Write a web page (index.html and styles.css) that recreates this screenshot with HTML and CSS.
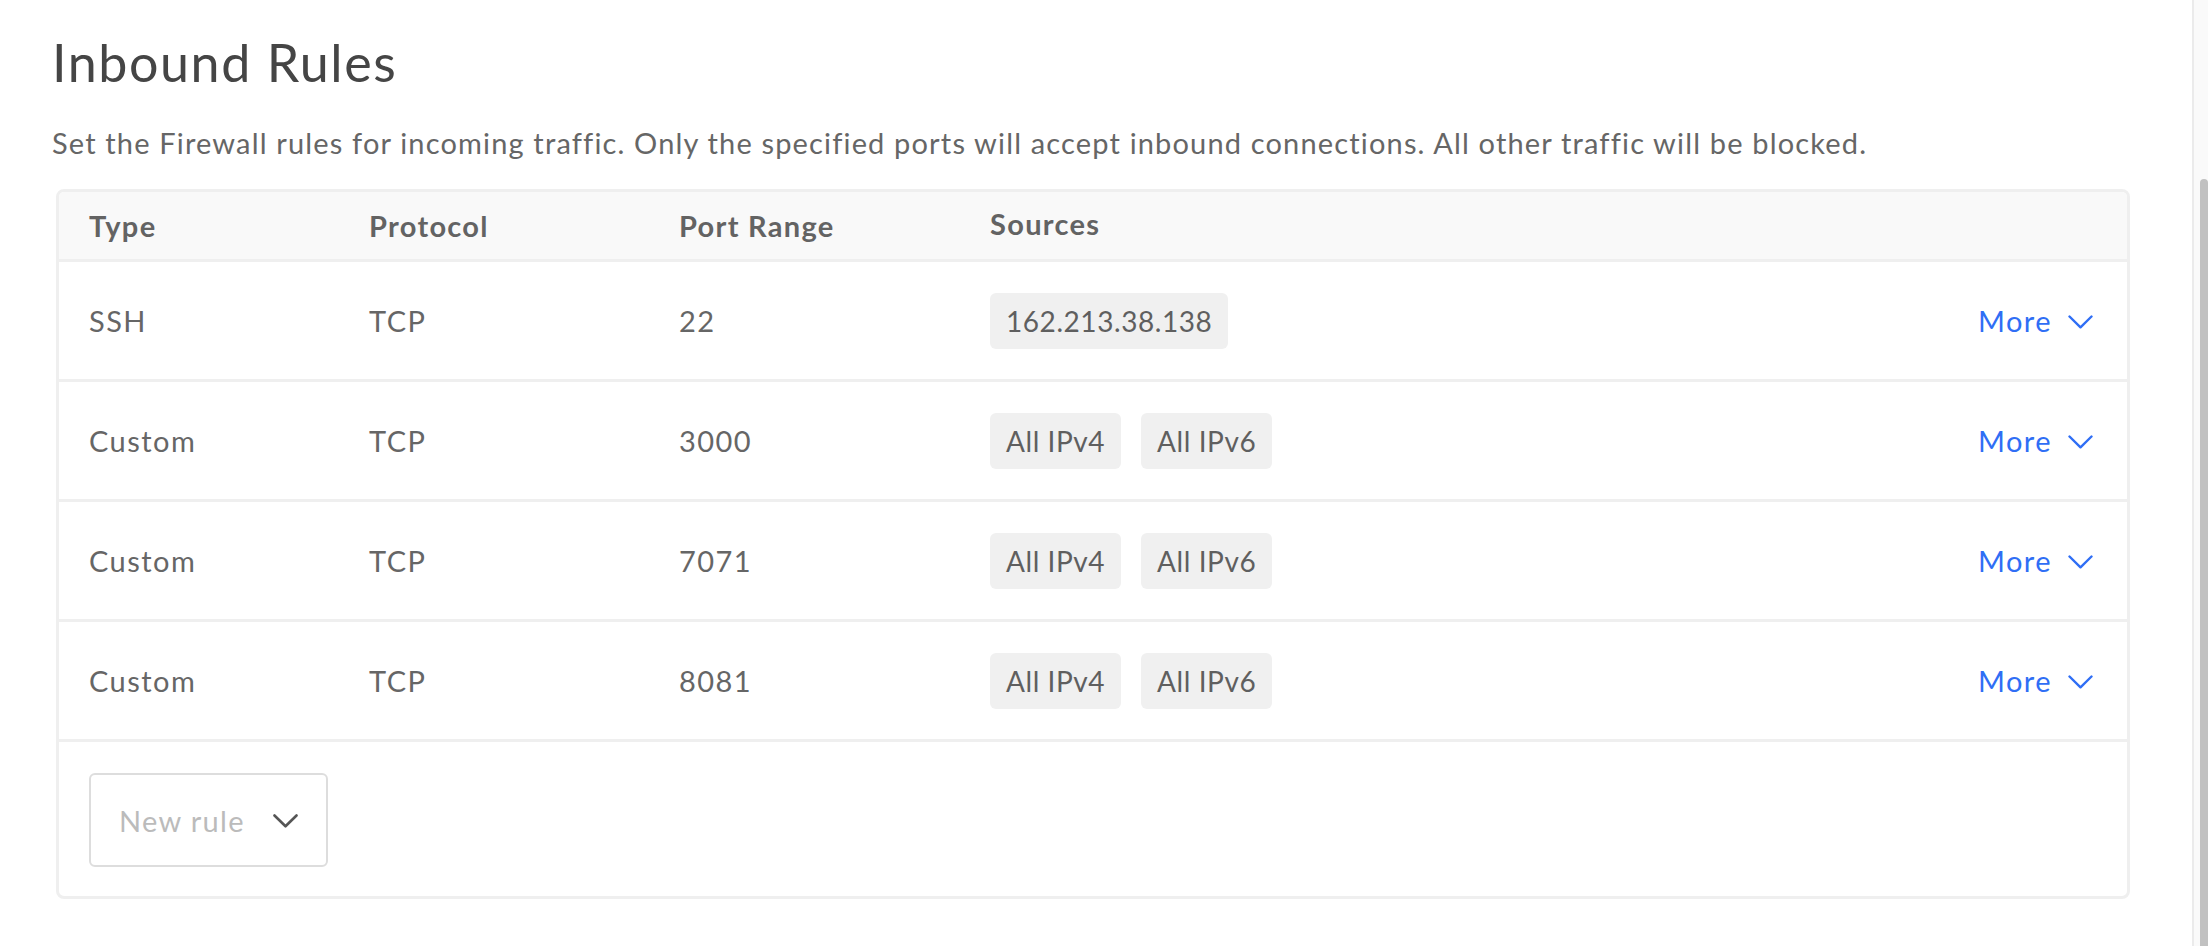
FILE: index.html
```html
<!DOCTYPE html>
<html lang="en">
<head>
<meta charset="utf-8">
<title>Inbound Rules</title>
<link rel="stylesheet" href="styles.css">
</head>
<body>
<div class="page">
  <main class="main">
    <h1 class="title">Inbound Rules</h1>
    <p class="desc">Set the Firewall rules for incoming traffic. Only the specified ports will accept inbound connections. All other traffic will be blocked.</p>
    <div class="table">
      <div class="row head">
        <div class="cell">Type</div>
        <div class="cell">Protocol</div>
        <div class="cell">Port Range</div>
        <div class="cell sources-h">Sources</div>
        <div class="cell"></div>
      </div>
      <div class="row">
        <div class="cell">SSH</div>
        <div class="cell">TCP</div>
        <div class="cell">22</div>
        <div class="cell chips"><span class="chip">162.213.38.138</span></div>
        <div class="cell"><a class="more">More <svg class="chev" viewBox="0 0 25 14" width="25" height="14"><path d="M1.5 1.5 L12.5 12.3 L23.5 1.5" fill="none" stroke="currentColor" stroke-width="2.4" stroke-linecap="round" stroke-linejoin="round"/></svg></a></div>
      </div>
      <div class="row">
        <div class="cell">Custom</div>
        <div class="cell">TCP</div>
        <div class="cell">3000</div>
        <div class="cell chips"><span class="chip">All IPv4</span><span class="chip">All IPv6</span></div>
        <div class="cell"><a class="more">More <svg class="chev" viewBox="0 0 25 14" width="25" height="14"><path d="M1.5 1.5 L12.5 12.3 L23.5 1.5" fill="none" stroke="currentColor" stroke-width="2.4" stroke-linecap="round" stroke-linejoin="round"/></svg></a></div>
      </div>
      <div class="row">
        <div class="cell">Custom</div>
        <div class="cell">TCP</div>
        <div class="cell">7071</div>
        <div class="cell chips"><span class="chip">All IPv4</span><span class="chip">All IPv6</span></div>
        <div class="cell"><a class="more">More <svg class="chev" viewBox="0 0 25 14" width="25" height="14"><path d="M1.5 1.5 L12.5 12.3 L23.5 1.5" fill="none" stroke="currentColor" stroke-width="2.4" stroke-linecap="round" stroke-linejoin="round"/></svg></a></div>
      </div>
      <div class="row">
        <div class="cell">Custom</div>
        <div class="cell">TCP</div>
        <div class="cell">8081</div>
        <div class="cell chips"><span class="chip">All IPv4</span><span class="chip">All IPv6</span></div>
        <div class="cell"><a class="more">More <svg class="chev" viewBox="0 0 25 14" width="25" height="14"><path d="M1.5 1.5 L12.5 12.3 L23.5 1.5" fill="none" stroke="currentColor" stroke-width="2.4" stroke-linecap="round" stroke-linejoin="round"/></svg></a></div>
      </div>
      <div class="foot">
        <button class="new-rule"><span>New rule</span><svg class="chev-dark" viewBox="0 0 25 14" width="25" height="14"><path d="M1.5 1.5 L12.5 12.3 L23.5 1.5" fill="none" stroke="currentColor" stroke-width="2.6" stroke-linecap="round" stroke-linejoin="round"/></svg></button>
      </div>
    </div>
  </main>
  <div class="scrollbar"><div class="thumb"></div></div>
</div>
</body>
</html>
```

FILE: styles.css
```css
html, body {
  margin: 0;
  padding: 0;
  background: #ffffff;
  height: 100%;
  overflow: hidden;
}

body {
  font-family: "Lato", "Liberation Sans", sans-serif;
  color: #666666;
}

.page {
  display: flex;
  height: 946px;
}

.main {
  flex: 1;
  padding: 31px 62px 0 52px;
}

.title {
  margin: 0;
  font-size: 52px;
  line-height: 62.4px;
  font-weight: 400;
  letter-spacing: 0.03em;
  color: #454545;
}

.desc {
  margin: 33px 0 0;
  font-size: 29px;
  line-height: 34.8px;
  letter-spacing: 0.04em;
  color: #666666;
}

.table {
  margin: 28px 0 0 4px;
  border: 3px solid #efefef;
  border-radius: 8px;
  overflow: hidden;
}

.row {
  display: grid;
  grid-template-columns: 280px 310px 311px 1fr auto;
  align-items: center;
  height: 117px;
  padding: 0 34px 0 30px;
  border-bottom: 3px solid #efefef;
  font-size: 29px;
  letter-spacing: 0.05em;
  color: #666666;
}

.row.head {
  height: 67px;
  background: #f9f9f9;
  font-weight: 700;
  letter-spacing: 0.045em;
  color: #636363;
}

.sources-h {
  padding-bottom: 5px;
}

.chips {
  display: flex;
  gap: 20px;
}

.chip {
  display: inline-flex;
  align-items: center;
  height: 56px;
  padding: 0 16px;
  border-radius: 6px;
  background: #f0f0f0;
  font-size: 28px;
  letter-spacing: 0.02em;
  color: #5f5f5f;
}

.more {
  display: flex;
  align-items: center;
  gap: 16px;
  color: #2f6ef5;
  cursor: pointer;
}

.chev {
  display: block;
  margin-top: 2px;
}

.foot {
  padding: 31px 30px 29px;
}

.new-rule {
  display: flex;
  align-items: center;
  justify-content: space-between;
  width: 239px;
  height: 94px;
  padding: 0 28px 0 28px;
  border: 2px solid #dddddd;
  border-radius: 6px;
  background: #ffffff;
  font-family: "Lato", "Liberation Sans", sans-serif;
  font-size: 29px;
  letter-spacing: 0.045em;
  color: #bbbbbb;
}

.chev-dark {
  display: block;
  color: #555555;
  margin-top: 2px;
}

.scrollbar {
  width: 14px;
  border-left: 2px solid #ebebeb;
  background: #fafafa;
  padding-top: 179px;
  display: flex;
  justify-content: flex-end;
}

.thumb {
  width: 8px;
  height: 800px;
  background: #c1c1c1;
  border-radius: 4px 4px 0 0;
}
```
